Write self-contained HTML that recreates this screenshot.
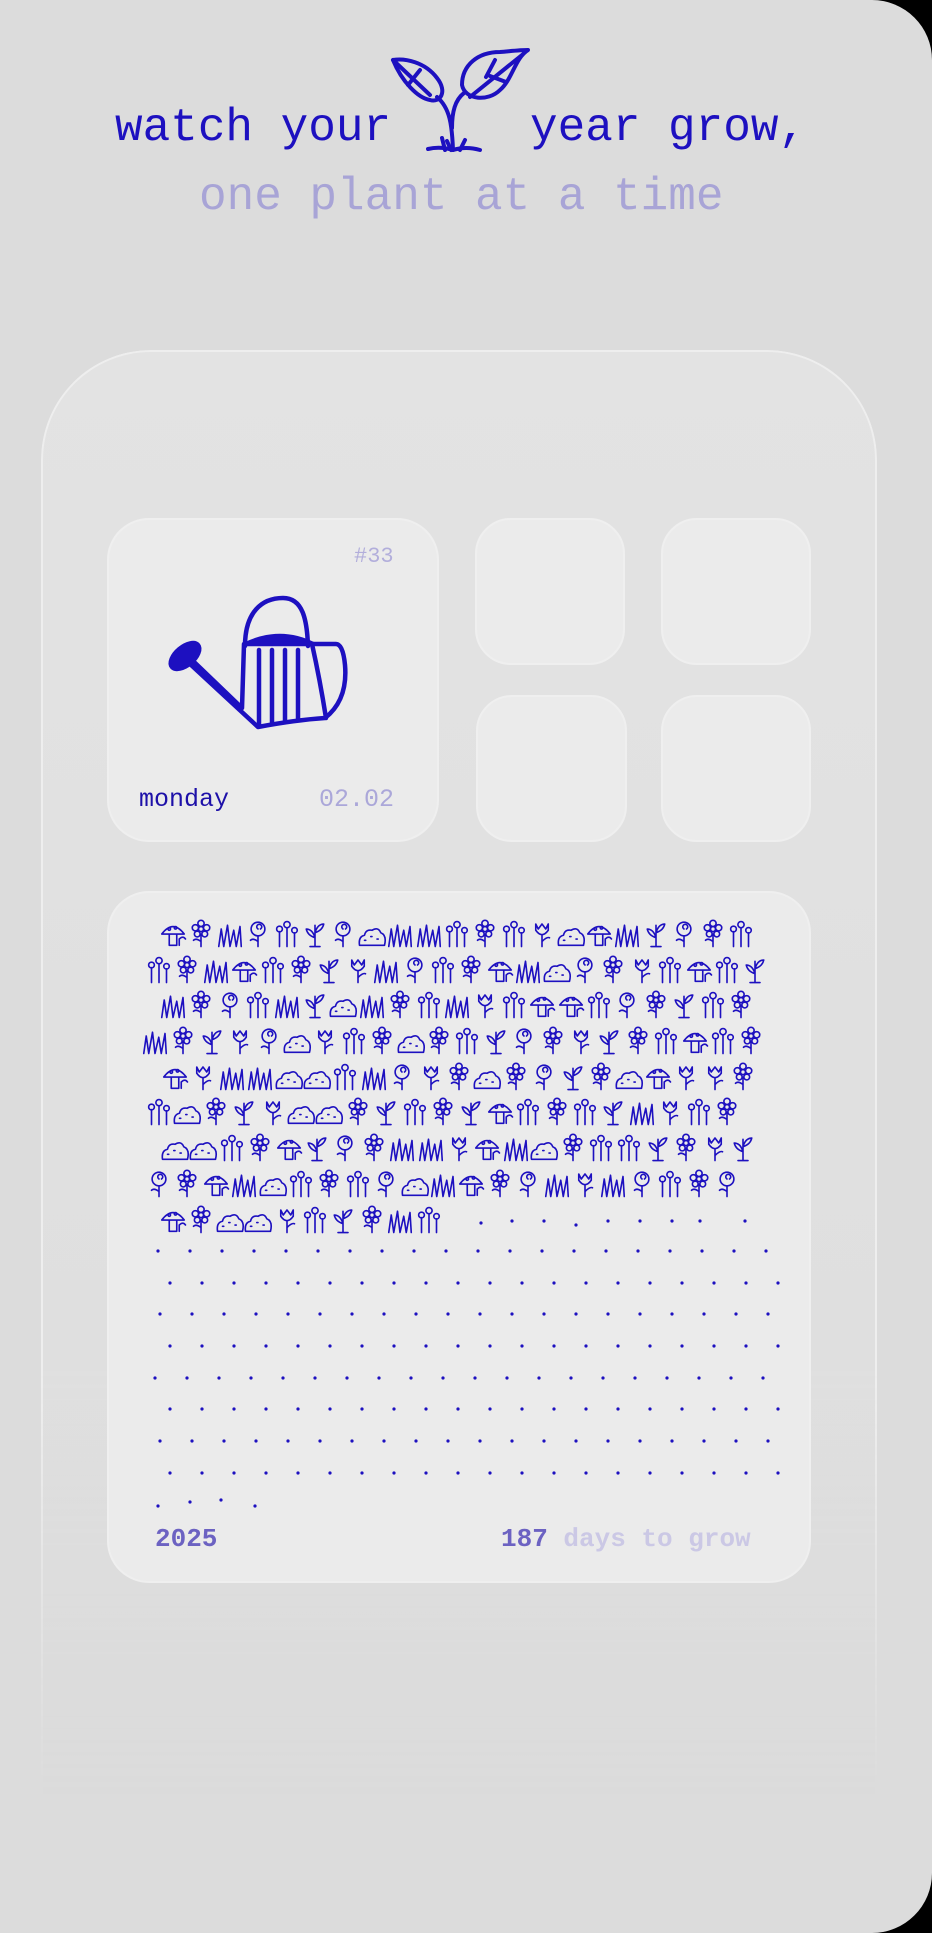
<!DOCTYPE html>
<html><head><meta charset="utf-8">
<style>
html,body{margin:0;padding:0;background:#000;}
#page{position:relative;width:932px;height:1933px;background:#dcdcdc;border-radius:0 60px 60px 0;overflow:hidden;font-family:"Liberation Mono","DejaVu Sans Mono",monospace;}
.t{position:absolute;white-space:pre;line-height:1;}
#card{position:absolute;left:41px;top:350px;width:836px;height:1450px;border-radius:110px 110px 0 0;background:linear-gradient(#e3e3e3,#dedede 85%,#dcdcdc);border:2px solid #eeeeee;border-bottom:none;box-sizing:border-box;-webkit-mask-image:linear-gradient(#000 70%,transparent);mask-image:linear-gradient(#000 70%,transparent);}
.w{position:absolute;background:#ebebeb;border:2px solid #efefef;box-sizing:border-box;border-radius:36px;}
</style></head><body>
<div id="page">
<div class="t" style="left:115px;top:105px;font-size:46px;color:#1d10c0;">watch your</div>
<div class="t" style="left:530px;top:105px;font-size:46px;color:#1d10c0;">year grow,</div>
<div class="t" style="left:199px;top:174px;font-size:46px;color:#a8a4d6;">one plant at a time</div>

<div id="card"></div>
<div class="w" style="left:107px;top:518px;width:332px;height:324px;border-radius:42px;"></div>
<div class="w" style="left:475px;top:518px;width:150px;height:147px;"></div>
<div class="w" style="left:661px;top:518px;width:150px;height:147px;"></div>
<div class="w" style="left:476px;top:695px;width:151px;height:147px;"></div>
<div class="w" style="left:661px;top:695px;width:150px;height:147px;"></div>
<div class="w" style="left:107px;top:891px;width:704px;height:692px;border-radius:42px;"></div>

<div class="t" style="left:354px;top:546px;font-size:22px;color:#b2aedb;">#33</div>
<div class="t" style="left:139px;top:787px;font-size:25px;color:#1d10a8;">monday</div>
<div class="t" style="left:319px;top:787px;font-size:25px;color:#aba7d9;">02.02</div>
<div class="t" style="left:155px;top:1526px;font-size:26px;color:#6c62c2;font-weight:bold;">2025</div>
<div class="t" style="left:501px;top:1526px;font-size:26px;color:#6c62c2;font-weight:bold;">187 <span style="color:#cbc8e5;">days to grow</span></div>

<svg width="932" height="1933" style="position:absolute;left:0;top:0" fill="none" stroke="#1d10c0" stroke-linecap="round" stroke-linejoin="round">
<defs>
<g id="a" stroke-width="1.3" transform="translate(-2 -3) scale(1.25)"><path d="M12 22V12M12 18Q8 15 6 17"/><circle cx="12" cy="8" r="2"/><circle cx="12" cy="3.5" r="2.5"/><circle cx="16.5" cy="7" r="2.5"/><circle cx="15" cy="12" r="2.3"/><circle cx="9" cy="12" r="2.3"/><circle cx="7.5" cy="7" r="2.5"/></g>
<g id="b" stroke-width="1.3" transform="translate(-2 -3) scale(1.25)"><path d="M3 22L5 8L7 22L10 5L12 22L15 9L17 22L20 6L21 22"/></g>
<g id="c" stroke-width="1.3" transform="translate(-2 -3) scale(1.25)"><path d="M3 12Q12 0 21 12ZM9 12V21H15V12"/><circle cx="9" cy="8" r="1"/><circle cx="14" cy="7" r="1"/><path d="M17 21V16Q20 13 22 16"/></g>
<g id="d" stroke-width="1.3" transform="translate(-2 -3) scale(1.25)"><path d="M12 22V13M7 4L9 8L12 4L15 8L17 4V9Q12 16 7 9ZM12 18Q16 14 18 15"/></g>
<g id="e" stroke-width="1.3" transform="translate(-2 -3) scale(1.25)"><path d="M12 22V5M12 15Q6 13 5 8Q10 8 12 15M12 11Q18 9 19 4Q14 4 12 11M8 22H16"/></g>
<g id="f" stroke-width="1.3" transform="translate(-2 -3) scale(1.25)"><path d="M2 21Q1 14 6 13Q7 8 12 9Q17 6 19 11Q24 13 22 21ZM6 17h1M11 14h1M16 16h1"/></g>
<g id="g" stroke-width="1.3" transform="translate(-2 -3) scale(1.25)"><path d="M6 22V10M12 22V7M18 22V11"/><circle cx="6" cy="8" r="2.3"/><circle cx="12" cy="4.5" r="2.5"/><circle cx="18" cy="9" r="2.2"/></g>
<g id="h" stroke-width="1.3" transform="translate(-2 -3) scale(1.25)"><circle cx="12" cy="8" r="5.5"/><path d="M12 8a2 2 0 1 1 2 0M12 13.5V22M12 18Q8 15 6 17"/></g>
<g id="dr" fill="#1d10c0" stroke="none"><circle cx="0" cy="0" r="1.6"/><circle cx="32" cy="0" r="1.6"/><circle cx="64" cy="0" r="1.6"/><circle cx="96" cy="0" r="1.6"/><circle cx="128" cy="0" r="1.6"/><circle cx="160" cy="0" r="1.6"/><circle cx="192" cy="0" r="1.6"/><circle cx="224" cy="0" r="1.6"/><circle cx="256" cy="0" r="1.6"/><circle cx="288" cy="0" r="1.6"/><circle cx="320" cy="0" r="1.6"/><circle cx="352" cy="0" r="1.6"/><circle cx="384" cy="0" r="1.6"/><circle cx="416" cy="0" r="1.6"/><circle cx="448" cy="0" r="1.6"/><circle cx="480" cy="0" r="1.6"/><circle cx="512" cy="0" r="1.6"/><circle cx="544" cy="0" r="1.6"/><circle cx="576" cy="0" r="1.6"/><circle cx="608" cy="0" r="1.6"/></g>
</defs>

<!-- sprout -->
<g stroke-width="4">
<path d="M393 60C405 58 425 62 437 78C448 92 440 103 430 100C418 98 402 82 393 60Z"/>
<path d="M393 60L430 95M420 70L408 85"/>
<path d="M528 50C515 58 512 80 500 90C488 102 465 100 462 85C462 65 478 52 500 52C512 51 520 50 528 50Z"/>
<path d="M470 97L522 55M495 60L486 77M490 76L506 82"/>
<path d="M453 150C452 125 450 108 437 97M452 128C452 112 455 100 464 93"/>
<path d="M428 149Q440 146 453 150Q466 146 480 150M445 150L442 138M460 150L465 140M451 150L447 141"/>
</g>

<!-- watering can -->
<g stroke-width="4.5">
<path d="M245 646C245 612 262 598 283 598C303 598 307 620 308 646"/>
<path d="M246 644Q280 628 313 644Z" fill="#1d10c0"/>
<path d="M244 644L242 708M242 708L192 660M258 727L190 664M258 727Q295 720 325 718Q348 700 345 665Q343 644 336 644H312Q320 680 326 718"/>
<path d="M259 650V726M272 650V724M285 650V722M298 650V720"/>
<ellipse cx="185" cy="656" rx="17" ry="9" transform="rotate(-40 185 656)" fill="#1d10c0"/>
</g>

<!-- plant rows -->
<g transform="translate(160 922)"><use href="#c"/><use href="#a" x="28"/><use href="#b" x="57"/><use href="#h" x="85"/><use href="#g" x="114"/><use href="#e" x="142"/><use href="#h" x="170"/><use href="#f" x="199"/><use href="#b" x="227"/><use href="#b" x="256"/><use href="#g" x="284"/><use href="#a" x="312"/><use href="#g" x="341"/><use href="#d" x="369"/><use href="#f" x="398"/><use href="#c" x="426"/><use href="#b" x="454"/><use href="#e" x="483"/><use href="#h" x="511"/><use href="#a" x="540"/><use href="#g" x="568"/></g>
<g transform="translate(146 958)"><use href="#g"/><use href="#a" x="28"/><use href="#b" x="57"/><use href="#c" x="85"/><use href="#g" x="114"/><use href="#a" x="142"/><use href="#e" x="170"/><use href="#d" x="199"/><use href="#b" x="227"/><use href="#h" x="256"/><use href="#g" x="284"/><use href="#a" x="312"/><use href="#c" x="341"/><use href="#b" x="369"/><use href="#f" x="398"/><use href="#h" x="426"/><use href="#a" x="454"/><use href="#d" x="483"/><use href="#g" x="511"/><use href="#c" x="540"/><use href="#g" x="568"/><use href="#e" x="596"/></g>
<g transform="translate(160 993)"><use href="#b"/><use href="#a" x="28"/><use href="#h" x="57"/><use href="#g" x="85"/><use href="#b" x="114"/><use href="#e" x="142"/><use href="#f" x="170"/><use href="#b" x="199"/><use href="#a" x="227"/><use href="#g" x="256"/><use href="#b" x="284"/><use href="#d" x="312"/><use href="#g" x="341"/><use href="#c" x="369"/><use href="#c" x="398"/><use href="#g" x="426"/><use href="#h" x="454"/><use href="#a" x="483"/><use href="#e" x="511"/><use href="#g" x="540"/><use href="#a" x="568"/></g>
<g transform="translate(142 1029)"><use href="#b"/><use href="#a" x="28"/><use href="#e" x="57"/><use href="#d" x="85"/><use href="#h" x="114"/><use href="#f" x="142"/><use href="#d" x="170"/><use href="#g" x="199"/><use href="#a" x="227"/><use href="#f" x="256"/><use href="#a" x="284"/><use href="#g" x="312"/><use href="#e" x="341"/><use href="#h" x="369"/><use href="#a" x="398"/><use href="#d" x="426"/><use href="#e" x="454"/><use href="#a" x="483"/><use href="#g" x="511"/><use href="#c" x="540"/><use href="#g" x="568"/><use href="#a" x="596"/></g>
<g transform="translate(162 1065)"><use href="#c"/><use href="#d" x="28"/><use href="#b" x="57"/><use href="#b" x="85"/><use href="#f" x="114"/><use href="#f" x="142"/><use href="#g" x="170"/><use href="#b" x="199"/><use href="#h" x="227"/><use href="#d" x="256"/><use href="#a" x="284"/><use href="#f" x="312"/><use href="#a" x="341"/><use href="#h" x="369"/><use href="#e" x="398"/><use href="#a" x="426"/><use href="#f" x="454"/><use href="#c" x="483"/><use href="#d" x="511"/><use href="#d" x="540"/><use href="#a" x="568"/></g>
<g transform="translate(146 1100)"><use href="#g"/><use href="#f" x="28"/><use href="#a" x="57"/><use href="#e" x="85"/><use href="#d" x="114"/><use href="#f" x="142"/><use href="#f" x="170"/><use href="#a" x="199"/><use href="#e" x="227"/><use href="#g" x="256"/><use href="#a" x="284"/><use href="#e" x="312"/><use href="#c" x="341"/><use href="#g" x="369"/><use href="#a" x="398"/><use href="#g" x="426"/><use href="#e" x="454"/><use href="#b" x="483"/><use href="#d" x="511"/><use href="#g" x="540"/><use href="#a" x="568"/></g>
<g transform="translate(162 1136)"><use href="#f"/><use href="#f" x="28"/><use href="#g" x="57"/><use href="#a" x="85"/><use href="#c" x="114"/><use href="#e" x="142"/><use href="#h" x="170"/><use href="#a" x="199"/><use href="#b" x="227"/><use href="#b" x="256"/><use href="#d" x="284"/><use href="#c" x="312"/><use href="#b" x="341"/><use href="#f" x="369"/><use href="#a" x="398"/><use href="#g" x="426"/><use href="#g" x="454"/><use href="#e" x="483"/><use href="#a" x="511"/><use href="#d" x="540"/><use href="#e" x="568"/></g>
<g transform="translate(146 1172)"><use href="#h"/><use href="#a" x="28"/><use href="#c" x="57"/><use href="#b" x="85"/><use href="#f" x="114"/><use href="#g" x="142"/><use href="#a" x="170"/><use href="#g" x="199"/><use href="#h" x="227"/><use href="#f" x="256"/><use href="#b" x="284"/><use href="#c" x="312"/><use href="#a" x="341"/><use href="#h" x="369"/><use href="#b" x="398"/><use href="#d" x="426"/><use href="#b" x="454"/><use href="#h" x="483"/><use href="#g" x="511"/><use href="#a" x="540"/><use href="#h" x="568"/></g>
<g transform="translate(160 1208)"><use href="#c"/><use href="#a" x="28"/><use href="#f" x="57"/><use href="#f" x="85"/><use href="#d" x="114"/><use href="#g" x="142"/><use href="#e" x="170"/><use href="#a" x="199"/><use href="#b" x="227"/><use href="#g" x="256"/></g>

<!-- dots -->
<g fill="#1d10c0" stroke="none">
<use href="#dr" x="158" y="1251"/>
<use href="#dr" x="170" y="1283"/>
<use href="#dr" x="160" y="1314"/>
<use href="#dr" x="170" y="1346"/>
<use href="#dr" x="155" y="1378"/>
<use href="#dr" x="170" y="1409"/>
<use href="#dr" x="160" y="1441"/>
<use href="#dr" x="170" y="1473"/>
<circle cx="481" cy="1223" r="1.6"/><circle cx="512" cy="1221" r="1.6"/><circle cx="544" cy="1221" r="1.6"/><circle cx="576" cy="1225" r="1.6"/><circle cx="608" cy="1221" r="1.6"/><circle cx="640" cy="1221" r="1.6"/><circle cx="672" cy="1221" r="1.6"/><circle cx="700" cy="1221" r="1.6"/><circle cx="745" cy="1221" r="1.6"/>
<circle cx="158" cy="1506" r="1.6"/><circle cx="190" cy="1502" r="1.6"/><circle cx="221" cy="1500" r="1.6"/><circle cx="255" cy="1506" r="1.6"/>
</g>
</svg>
</div>
</body></html>
